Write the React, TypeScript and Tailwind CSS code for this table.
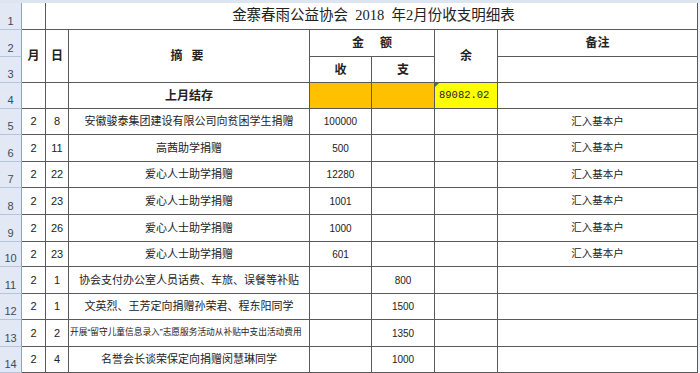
import React from "react";

const rows = [
  { n: 5, m: "2", d: "8", desc: "安徽骏泰集团建设有限公司向贫困学生捐赠", inc: "100000", out: "", note: "汇入基本户" },
  { n: 6, m: "2", d: "11", desc: "高茜助学捐赠", inc: "500", out: "", note: "汇入基本户" },
  { n: 7, m: "2", d: "22", desc: "爱心人士助学捐赠", inc: "12280", out: "", note: "汇入基本户" },
  { n: 8, m: "2", d: "23", desc: "爱心人士助学捐赠", inc: "1001", out: "", note: "汇入基本户" },
  { n: 9, m: "2", d: "26", desc: "爱心人士助学捐赠", inc: "1000", out: "", note: "汇入基本户" },
  { n: 10, m: "2", d: "23", desc: "爱心人士助学捐赠", inc: "601", out: "", note: "汇入基本户" },
  { n: 11, m: "2", d: "1", desc: "协会支付办公室人员话费、车旅、误餐等补贴", inc: "", out: "800", note: "" },
  { n: 12, m: "2", d: "1", desc: "文英烈、王芳定向捐赠孙荣君、程东阳同学", inc: "", out: "1500", note: "" },
  { n: 13, m: "2", d: "2", desc: "开展“留守儿童信息录入”志愿服务活动从补贴中支出活动费用", inc: "", out: "1350", note: "", small: true },
  { n: 14, m: "2", d: "4", desc: "名誉会长谈荣保定向捐赠闵慧琳同学", inc: "", out: "1000", note: "" },
];

const cell = "flex items-center justify-center border-r border-b border-[#5a5a5a] overflow-hidden whitespace-nowrap";
const rowHead =
  "flex items-end justify-center pb-[2px] leading-none bg-[#e2e9f4] border-r border-b border-r-[#8ea3bd] border-b-[#b4c4da] text-[11px] text-[#3d4a5c]";

const Ledger = () => {
  return (
    <div
      className="w-[700px] h-[373px] overflow-hidden bg-white text-[#222] grid grid-cols-[22px_24px_23px_241px_62px_63px_63px_200px_2px] grid-rows-[3px_27px_27px_26px_26px_26px_27px_26px_27px_27px_25px_27px_26px_27px_26px]"
      style={{ fontFamily: '"Liberation Sans", "Noto Sans CJK SC", sans-serif' }}
    >
      {/* column header strip */}
      <div className="col-span-9 bg-[#dde5f1]" />

      {/* row 1: title */}
      <div className={rowHead}>1</div>
      <div className={cell} />
      <div
        className={cell + " col-span-6 text-[14.5px] pl-1"}
        style={{ fontFamily: '"Liberation Serif", "Noto Sans CJK SC", serif' }}
      >
        金寨春雨公益协会&nbsp;&nbsp;2018&nbsp;&nbsp;年2月份收支明细表
      </div>
      <div className="row-span-14 bg-[#eef2f8]" />

      {/* rows 2-3: headers */}
      <div className={rowHead}>2</div>
      <div className={cell + " row-span-2 font-bold text-[12px]"}>月</div>
      <div className={cell + " row-span-2 font-bold text-[12px]"}>日</div>
      <div className={cell + " row-span-2 font-bold text-[12px] gap-[9px] pr-1"}>
        <span>摘</span>
        <span>要</span>
      </div>
      <div className={cell + " col-span-2 font-bold text-[12px] gap-[16px]"}>
        <span>金</span>
        <span>额</span>
      </div>
      <div className={cell + " row-span-2 font-bold text-[12px]"}>余</div>
      <div className={cell + " font-bold text-[12px]"}>备注</div>
      <div className={rowHead}>3</div>
      <div className={cell + " font-bold text-[12px]"}>收</div>
      <div className={cell + " font-bold text-[12px]"}>支</div>
      <div className={cell} />

      {/* row 4: carried balance */}
      <div className={rowHead}>4</div>
      <div className={cell} />
      <div className={cell} />
      <div className={cell + " font-bold text-[12px]"}>上月结存</div>
      <div className={cell + " bg-[#ffc000]"} />
      <div className={cell + " bg-[#ffc000]"} />
      <div
        className={cell + " relative justify-start pl-[4px] bg-[#ffff00] text-[10.5px]"}
        style={{ fontFamily: '"Liberation Mono", monospace' }}
      >
        <span className="absolute left-0 top-0 w-0 h-0 border-t-[4px] border-r-[4px] border-t-[#1f8a2e] border-r-transparent" />
        89082.02
      </div>
      <div className={cell} />

      {/* data rows */}
      {rows.map((r) => (
        <React.Fragment key={r.n}>
          <div className={rowHead}>{r.n}</div>
          <div className={cell + " text-[11px]"}>{r.m}</div>
          <div className={cell + " text-[11px]"}>{r.d}</div>
          <div className={cell + (r.small ? " text-[8.7px] justify-start pl-[1px]" : " text-[11px]")}>{r.desc}</div>
          <div className={cell + " text-[10px]"}>{r.inc}</div>
          <div className={cell + " text-[10px]"}>{r.out}</div>
          <div className={cell} />
          <div className={cell + " text-[10.5px]"}>{r.note}</div>
        </React.Fragment>
      ))}
    </div>
  );
};

export default function App() {
  return <Ledger />;
}
